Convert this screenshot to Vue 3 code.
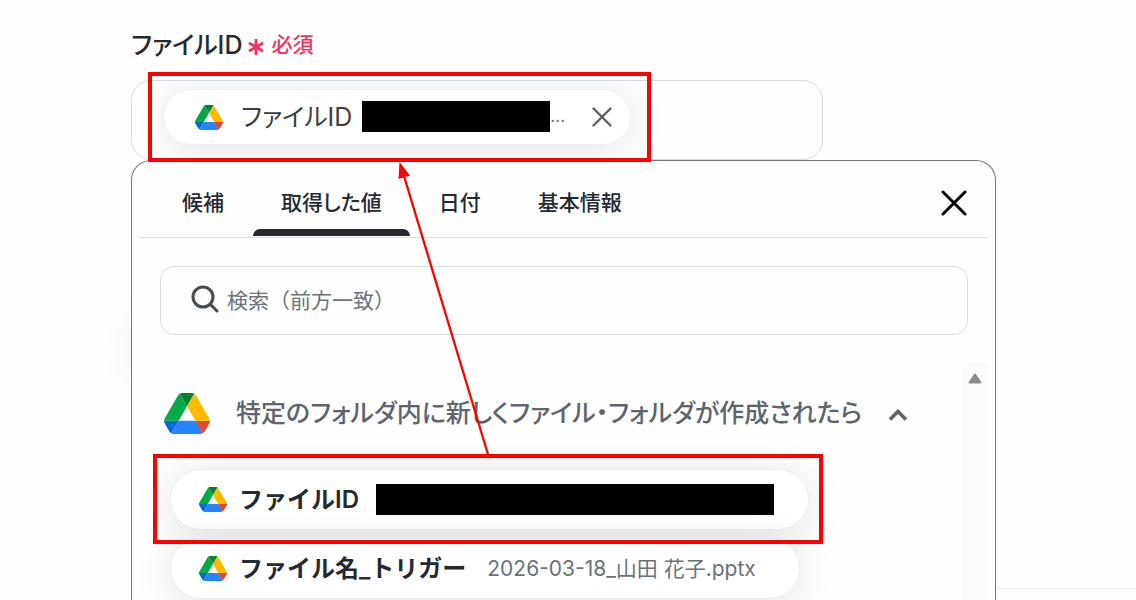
<script setup>
import { ref } from 'vue'

const tabs = ['候補', '取得した値', '日付', '基本情報']
const activeTab = ref('取得した値')
const keyword = ref('')
const open = ref(true)

const drivePaths = [
  { d: 'M6.6 66.85l3.85 6.65c.8 1.4 1.95 2.5 3.3 3.3l13.75-23.8H0c0 1.55.4 3.1 1.2 4.5z', fill: '#0066da' },
  { d: 'M43.65 25L29.9 1.2c-1.35.8-2.5 1.9-3.3 3.3L1.2 48.5A9.06 9.06 0 0 0 0 53h27.5z', fill: '#00ac47' },
  { d: 'M73.55 76.8c1.35-.8 2.5-1.9 3.3-3.3l1.6-2.75L86.1 57.5c.8-1.4 1.2-2.95 1.2-4.5H59.8l5.85 11.5z', fill: '#ea4335' },
  { d: 'M43.65 25L57.4 1.2C56.05.4 54.5 0 52.9 0H34.4c-1.6 0-3.15.45-4.5 1.2z', fill: '#00832d' },
  { d: 'M59.8 53H27.5L13.75 76.8c1.35.8 2.9 1.2 4.5 1.2h50.8c1.6 0 3.15-.45 4.5-1.2z', fill: '#2684fc' },
  { d: 'M73.4 26.5L60.7 4.5c-.8-1.4-1.95-2.5-3.3-3.3L43.65 25 59.8 53h27.45c0-1.55-.4-3.1-1.2-4.5z', fill: '#ffba00' }
]
</script>

<template>
  <main class="page">
    <div class="backdrop"></div>

    <section class="form">
      <div class="label">
        <span>ファイルID</span>
        <span class="required">
          <svg class="asterisk" viewBox="0 0 16 16" aria-hidden="true">
            <path d="M8 0v16M1 4l14 8M15 4L1 12" />
          </svg>
          必須
        </span>
      </div>

      <div class="field">
        <div class="chip">
          <svg class="drive" viewBox="0 0 87.3 78" aria-hidden="true">
            <path v-for="p in drivePaths" :key="p.d" :d="p.d" :fill="p.fill" />
          </svg>
          <span class="chip-name">ファイルID</span>
          <span class="mask"></span>
          <span class="dots">...</span>
          <button class="chip-remove" type="button" aria-label="削除">
            <svg viewBox="0 0 20 20" aria-hidden="true"><path d="M1.5 1.5l17 17M18.5 1.5l-17 17" /></svg>
          </button>
        </div>
      </div>

      <div class="panel">
        <div class="tabs">
          <button
            v-for="t in tabs"
            :key="t"
            type="button"
            class="tab"
            :class="{ active: t === activeTab }"
            @click="activeTab = t"
          >{{ t }}</button>
          <button class="close" type="button" aria-label="閉じる">
            <svg viewBox="0 0 26 26" aria-hidden="true"><path d="M2 2l22 22M24 2L2 24" /></svg>
          </button>
        </div>

        <label class="search">
          <svg viewBox="0 0 28 28" aria-hidden="true">
            <circle cx="12" cy="12" r="10" /><path d="M19.5 19.5l6.5 6.5" />
          </svg>
          <input v-model="keyword" type="text" aria-label="検索" placeholder="検索（前方一致）" />
        </label>

        <div class="results">
          <div class="list">
            <button class="group" type="button" :aria-expanded="open" @click="open = !open">
              <svg class="drive large" viewBox="0 0 87.3 78" aria-hidden="true">
                <path v-for="p in drivePaths" :key="p.d" :d="p.d" :fill="p.fill" />
              </svg>
              <span>特定のフォルダ内に新しくファイル・フォルダが作成されたら</span>
              <svg class="chevron" viewBox="0 0 20 12" aria-hidden="true"><path d="M2 10.5l8-8 8 8" /></svg>
            </button>
            <button class="item" type="button">
              <svg class="drive" viewBox="0 0 87.3 78" aria-hidden="true">
                <path v-for="p in drivePaths" :key="p.d" :d="p.d" :fill="p.fill" />
              </svg>
              <span class="item-name">ファイルID</span>
              <span class="mask wide"></span>
            </button>
            <button class="item" type="button">
              <svg class="drive" viewBox="0 0 87.3 78" aria-hidden="true">
                <path v-for="p in drivePaths" :key="p.d" :d="p.d" :fill="p.fill" />
              </svg>
              <span class="item-name">ファイル名_トリガー</span>
              <span class="item-value">2026-03-18_山田 花子.pptx</span>
            </button>
          </div>
          <div class="scrollbar">
            <svg viewBox="0 0 14 11" aria-hidden="true">
              <path d="M7 1.5L12.5 9.5H1.5z" />
            </svg>
          </div>
        </div>
      </div>
    </section>

    <svg class="annotation" viewBox="0 0 1136 600" aria-hidden="true">
      <rect x="150" y="74" width="499" height="86" />
      <rect x="155" y="456" width="666" height="86" />
      <path class="line" d="M488.500 456L404 176" />
      <path class="head" d="M399.500 162L410 175.500L398.500 179z" />
    </svg>
  </main>
</template>

<style>
html,
body {
  background: #fefefe;
}
</style>

<style scoped>
* {
  box-sizing: border-box;
}

.page {
  position: relative;
  height: 100vh;
  padding: 28px 140px 0 131px;
  overflow: hidden;
  font-family: Inter, "Noto Sans CJK JP", sans-serif;
  line-height: 1.4;
  color: #252a32;
}

.page::after {
  content: "";
  position: absolute;
  right: 0;
  bottom: 11px;
  left: 996px;
  height: 1px;
  background: #ececee;
}

.backdrop {
  position: absolute;
  top: 320px;
  left: 140px;
  width: 200px;
  height: 60px;
  border-radius: 24px;
  box-shadow: 0 0 40px rgba(40, 60, 50, 0.14);
}

button {
  padding: 0;
  border: 0;
  background: none;
  color: inherit;
  font: inherit;
  cursor: pointer;
}

svg {
  display: block;
  flex: none;
}

.form {
  position: relative;
  display: flex;
  flex-direction: column;
  height: 100%;
}

.label {
  display: flex;
  align-items: center;
  gap: 6px;
  height: 34px;
  font-size: 25px;
  font-weight: 500;
  font-feature-settings: "palt";
}

.required {
  display: flex;
  align-items: center;
  gap: 7px;
  color: #f5325c;
  font-size: 21px;
}

.asterisk {
  width: 16px;
  height: 16px;
  margin-top: 4px;
  fill: none;
  stroke: currentColor;
  stroke-width: 2.8;
}

.field {
  flex: none;
  width: 80%;
  height: 80px;
  margin-top: 18px;
  padding: 8px 31px;
  border: 1px solid #d3dae2;
  border-radius: 20px;
  overflow: hidden;
  background: #fefefe;
}

.chip {
  display: flex;
  align-items: center;
  width: fit-content;
  height: 56px;
  padding: 0 18px 0 31px;
  border: 1px solid #ebeff4;
  border-radius: 28px;
  background: #fff;
  box-shadow: 0 4px 40px rgba(0, 0, 0, 0.1);
}

.drive {
  width: 28px;
  height: 25px;
}

.drive.large {
  width: 46px;
  height: 41px;
}

.chip-name {
  margin-left: 18px;
  color: #3b4047;
  font-size: 25px;
  font-feature-settings: "palt";
}

.mask {
  width: 188px;
  height: 31px;
  margin: 0 0 2px 10px;
  background: #000;
}

.mask.wide {
  width: 398px;
  margin: 0 0 0 17px;
}

.dots {
  color: #6b737d;
  font-size: 17px;
}

.chip-remove {
  margin-left: 27px;
}

.chip-remove svg {
  width: 20px;
  height: 20px;
  fill: none;
  stroke: #59616b;
  stroke-width: 2.4;
  stroke-linecap: round;
}

.panel {
  display: flex;
  flex: 1;
  flex-direction: column;
  min-height: 0;
  padding: 0 7px;
  border: 1px solid #727981;
  border-bottom: 0;
  border-radius: 20px 20px 0 0;
  background: #fefefe;
}

.tabs {
  display: flex;
  flex: none;
  gap: 1px;
  height: 77px;
  padding: 0 21px 0 15px;
  border-bottom: 1px solid #d6dde5;
}

.tab {
  position: relative;
  padding: 7px 28px 0;
  font-size: 21px;
  font-weight: 500;
  font-feature-settings: "palt";
}

.tab.active::after {
  content: "";
  position: absolute;
  right: 0;
  bottom: 1px;
  left: 0;
  height: 7px;
  border-radius: 7px 7px 0 0;
  background: #252a32;
}

.close {
  margin: 7px 0 0 auto;
}

.close svg {
  width: 26px;
  height: 26px;
  fill: none;
  stroke: #000;
  stroke-width: 3;
  stroke-linecap: round;
}

.search {
  display: flex;
  flex: none;
  align-items: center;
  gap: 8px;
  height: 69px;
  margin: 28px 20px 0 21px;
  padding: 0 30px;
  border: 1px solid #d6dde5;
  border-radius: 14px;
}

.search svg {
  width: 28px;
  height: 28px;
  margin-bottom: 4px;
  fill: none;
  stroke: #444c56;
  stroke-width: 3;
  stroke-linecap: round;
}

.search input {
  flex: 1;
  min-width: 0;
  padding: 0;
  border: 0;
  outline: 0;
  background: none;
  color: #252a32;
  font: inherit;
  font-size: 21px;
}

.search input::placeholder {
  color: #6b747e;
  opacity: 1;
}

.results {
  display: flex;
  flex: 1;
  min-height: 0;
  margin-top: 28px;
}

.list {
  display: flex;
  flex: 1;
  flex-direction: column;
  align-items: flex-start;
  gap: 8px;
  min-width: 0;
  padding: 20px 0 0 31px;
  overflow: hidden;
}

.group {
  display: flex;
  align-items: center;
  gap: 26px;
  height: 60px;
  margin: 0 0 18px -6px;
  color: #5c6570;
  font-size: 25px;
  font-weight: 500;
  font-feature-settings: "palt";
  white-space: nowrap;
}

.chevron {
  width: 20px;
  height: 12px;
  margin-top: 3px;
  fill: none;
  stroke: currentColor;
  stroke-width: 3.6;
}

.item {
  display: flex;
  flex: none;
  align-items: center;
  height: 61px;
  padding: 0 34px 0 28px;
  border: 1px solid #e8ecf1;
  border-radius: 31px;
  background: #fff;
  box-shadow: 0 4px 40px rgba(0, 0, 0, 0.1);
  white-space: nowrap;
}

.item-name {
  margin-left: 12px;
  font-size: 24px;
  font-weight: 600;
}

.item-value {
  margin: 0 9px 0 21px;
  color: #69727d;
  font-size: 21px;
}

.scrollbar {
  width: 26px;
  padding: 10px 6px;
  background: #fbfbfb;
}

.scrollbar svg {
  width: 14px;
  height: 11px;
  fill: #8b8b8b;
  stroke: #8b8b8b;
  stroke-width: 2;
  stroke-linejoin: round;
}

.annotation {
  position: absolute;
  top: 0;
  left: 0;
  width: 1136px;
  height: 600px;
  fill: none;
  stroke: #f00;
  stroke-width: 4;
  pointer-events: none;
}

.annotation .line {
  stroke-width: 2.3;
}

.annotation .head {
  fill: #f00;
  stroke: none;
}
</style>
